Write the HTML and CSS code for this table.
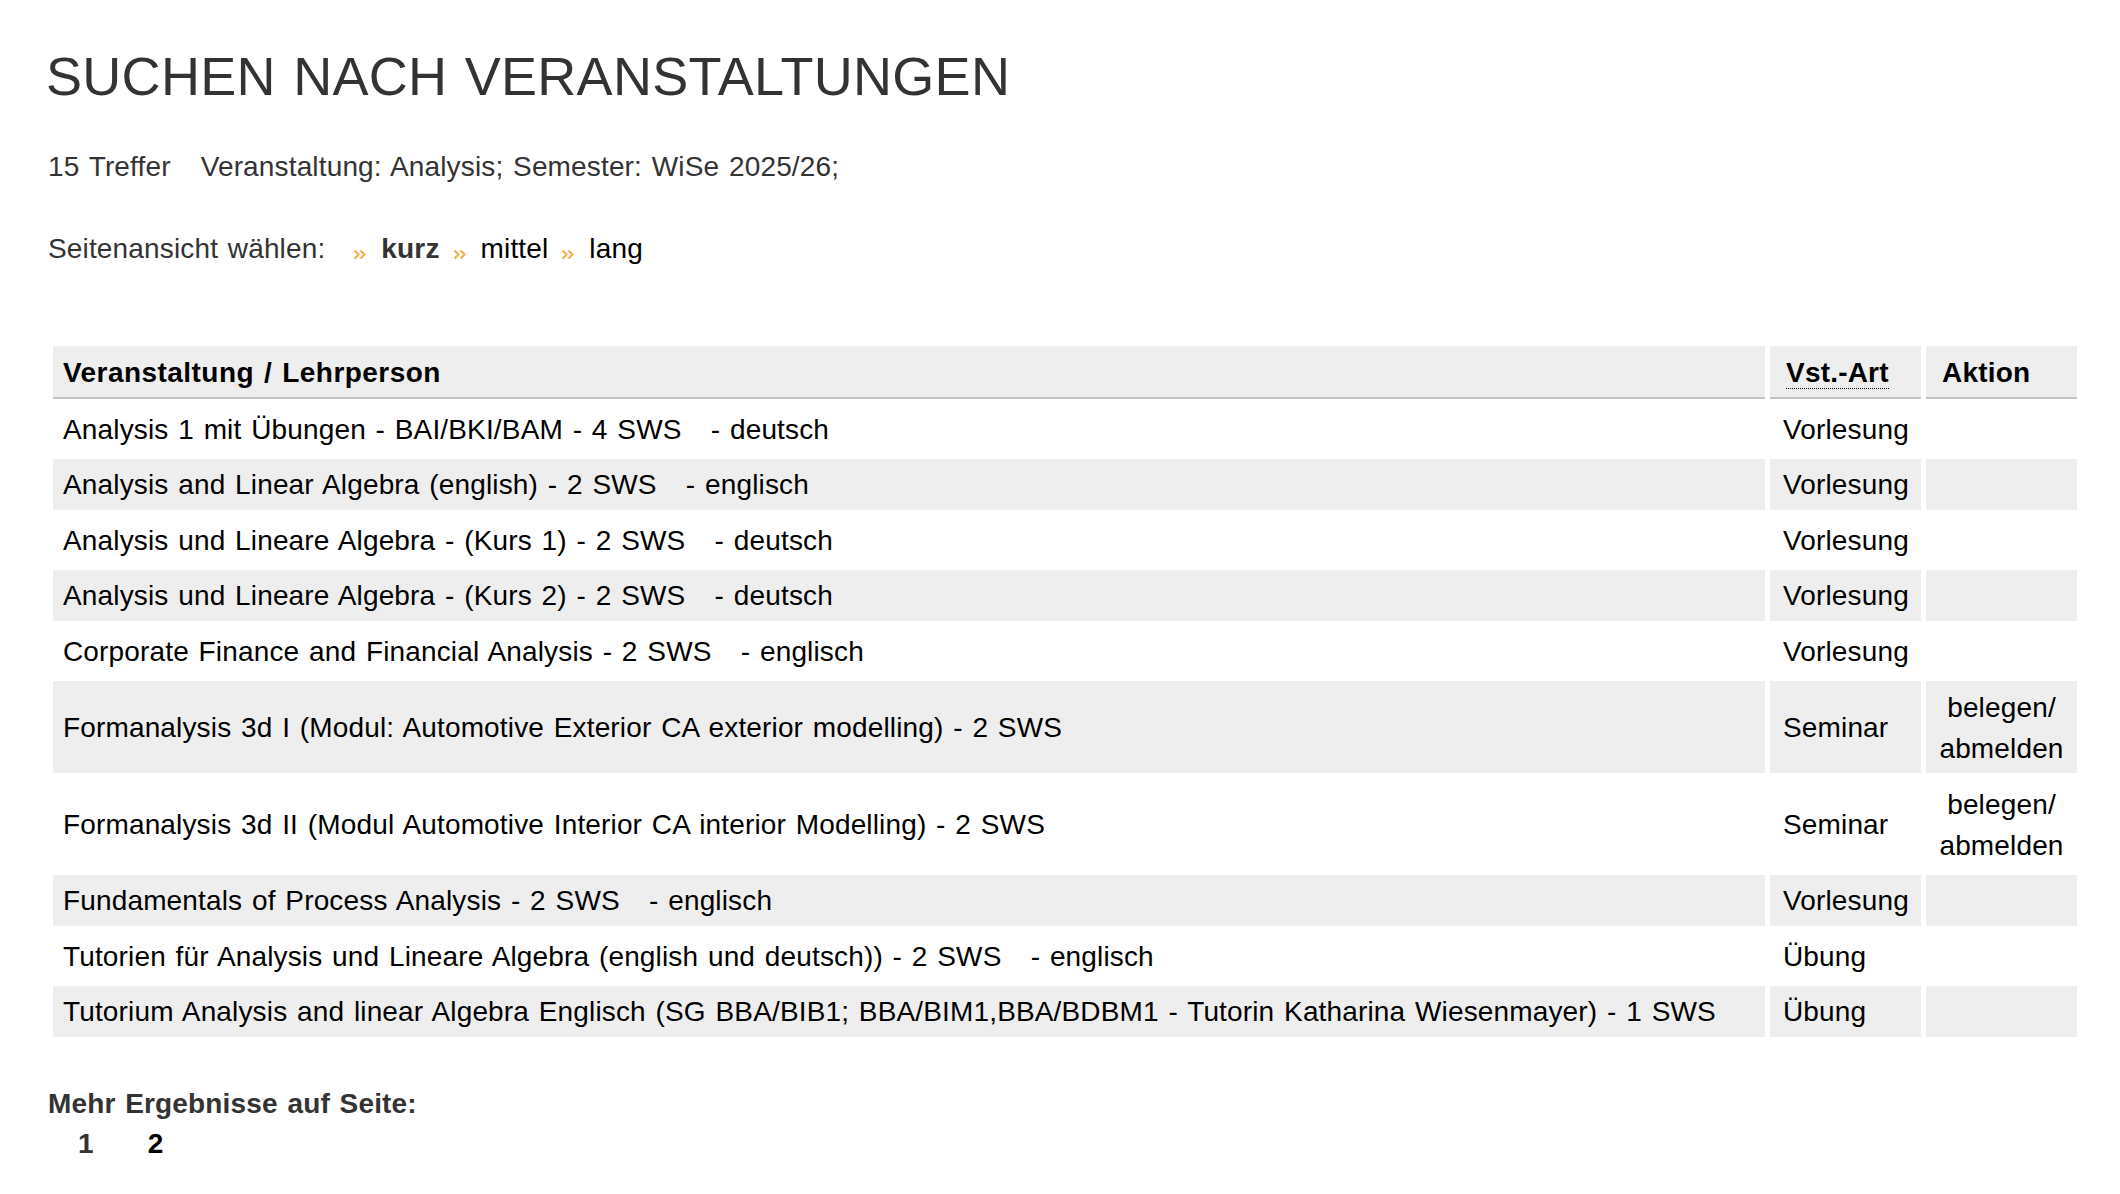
FILE: index.html
```html
<!DOCTYPE html>
<html lang="de">
<head>
<meta charset="utf-8">
<title>Suchen nach Veranstaltungen</title>
<link rel="stylesheet" href="styles.css">
</head>
<body>
<div class="page">
  <h1 class="title">SUCHEN NACH VERANSTALTUNGEN</h1>
  <p class="summary"><span>15 Treffer</span><span class="criteria">Veranstaltung: Analysis; Semester: WiSe 2025/26;</span></p>
  <p class="view"><span class="view-label">Seitenansicht wählen:</span><span class="opt"><svg class="chev" width="14" height="11" viewBox="0 0 14 11"><path d="M1.5 1.5 L5.5 5.5 L1.5 9.5 M7.5 1.5 L11.5 5.5 L7.5 9.5" fill="none" stroke="#f6ab45" stroke-width="2"/></svg><b class="current">kurz</b></span><span class="opt"><svg class="chev" width="14" height="11" viewBox="0 0 14 11"><path d="M1.5 1.5 L5.5 5.5 L1.5 9.5 M7.5 1.5 L11.5 5.5 L7.5 9.5" fill="none" stroke="#f6ab45" stroke-width="2"/></svg><a class="link">mittel</a></span><span class="opt"><svg class="chev" width="14" height="11" viewBox="0 0 14 11"><path d="M1.5 1.5 L5.5 5.5 L1.5 9.5 M7.5 1.5 L11.5 5.5 L7.5 9.5" fill="none" stroke="#f6ab45" stroke-width="2"/></svg><a class="link">lang</a></span></p>

  <table class="results">
    <colgroup>
      <col class="c-name">
      <col class="c-type">
      <col class="c-act">
    </colgroup>
    <thead>
      <tr>
        <th class="h-name">Veranstaltung / Lehrperson</th>
        <th class="h-type"><span class="abbr">Vst.-Art</span></th>
        <th class="h-act">Aktion</th>
      </tr>
    </thead>
    <tbody>
      <tr><td class="name">Analysis 1 mit Übungen - BAI/BKI/BAM - 4 SWS &nbsp; - deutsch</td><td class="type">Vorlesung</td><td class="act"></td></tr>
      <tr class="alt"><td class="name">Analysis and Linear Algebra (english) - 2 SWS &nbsp; - englisch</td><td class="type">Vorlesung</td><td class="act"></td></tr>
      <tr><td class="name">Analysis und Lineare Algebra - (Kurs 1) - 2 SWS &nbsp; - deutsch</td><td class="type">Vorlesung</td><td class="act"></td></tr>
      <tr class="alt"><td class="name">Analysis und Lineare Algebra - (Kurs 2) - 2 SWS &nbsp; - deutsch</td><td class="type">Vorlesung</td><td class="act"></td></tr>
      <tr><td class="name">Corporate Finance and Financial Analysis - 2 SWS &nbsp; - englisch</td><td class="type">Vorlesung</td><td class="act"></td></tr>
      <tr class="alt"><td class="name">Formanalysis 3d I (Modul: Automotive Exterior CA exterior modelling) - 2 SWS</td><td class="type">Seminar</td><td class="act"><a class="link">belegen/ abmelden</a></td></tr>
      <tr><td class="name">Formanalysis 3d II (Modul Automotive Interior CA interior Modelling) - 2 SWS</td><td class="type">Seminar</td><td class="act"><a class="link">belegen/ abmelden</a></td></tr>
      <tr class="alt"><td class="name">Fundamentals of Process Analysis - 2 SWS &nbsp; - englisch</td><td class="type">Vorlesung</td><td class="act"></td></tr>
      <tr><td class="name">Tutorien für Analysis und Lineare Algebra (english und deutsch)) - 2 SWS &nbsp; - englisch</td><td class="type">Übung</td><td class="act"></td></tr>
      <tr class="alt"><td class="name">Tutorium Analysis and linear Algebra Englisch (SG BBA/BIB1; BBA/BIM1,BBA/BDBM1 - Tutorin Katharina Wiesenmayer) - 1 SWS</td><td class="type">Übung</td><td class="act"></td></tr>
    </tbody>
  </table>

  <p class="more">Mehr Ergebnisse auf Seite:</p>
  <div class="pager"><span class="pg current">1</span><a class="pg link">2</a></div>
</div>
</body>
</html>
```

FILE: styles.css
```css
html, body {
  margin: 0;
  padding: 0;
  background: #ffffff;
}

body {
  font-family: "Liberation Sans", Arial, Helvetica, sans-serif;
  font-size: 28px;
  color: #333333;
  letter-spacing: 0.15px;
  word-spacing: 1.8px;
}

.page {
  padding: 0 38px 40px 48px;
}

.title {
  margin: 44px 0 0 -2px;
  font-size: 54px;
  line-height: 65px;
  font-weight: normal;
  color: #333333;
  letter-spacing: 0.3px;
  word-spacing: 2px;
}

.summary {
  margin: 37px 0 0;
  line-height: 41px;
}

.criteria {
  margin-left: 30px;
}

.view {
  margin: 41px 0 0;
  line-height: 41px;
}

.view-label {
  margin-right: 15px;
}

.opt {
  white-space: nowrap;
}

.chev {
  vertical-align: -2px;
  margin: 0 14px 0 13px;
}

.current {
  font-weight: bold;
  color: #333333;
}

.link {
  color: #000000;
  text-decoration: none;
  cursor: pointer;
}

.results {
  margin-top: 72px;
  width: 100%;
  border-spacing: 5px;
  table-layout: fixed;
  color: #000000;
}

.c-type,
.c-act {
  width: 151px;
}

.results th {
  background: #eeeeee;
  border-bottom: 2px solid #c3c3c3;
  font-weight: bold;
  text-align: left;
  line-height: 40.5px;
  padding: 7px 10px 3px;
  letter-spacing: 0.45px;
}

.results th.h-type,
.results th.h-act {
  padding-left: 16px;
  letter-spacing: 0.2px;
}

.abbr {
  border-bottom: 1px dotted #000000;
}

.results td {
  line-height: 40.5px;
  padding: 6px 10px 4px;
  vertical-align: middle;
}

.results td.type {
  padding-left: 13px;
}

.results td.act {
  line-height: 41px;
  text-align: center;
  padding: 6px 4px 4px;
}

.results tr.alt td {
  background: #eeeeee;
}

.more {
  margin: 42px 0 0;
  line-height: 40.5px;
  font-weight: bold;
}

.pager {
  display: flex;
  gap: 54px;
  padding-left: 30px;
  line-height: 40.5px;
  font-weight: bold;
}

.pg.link {
  color: #000000;
}
```
